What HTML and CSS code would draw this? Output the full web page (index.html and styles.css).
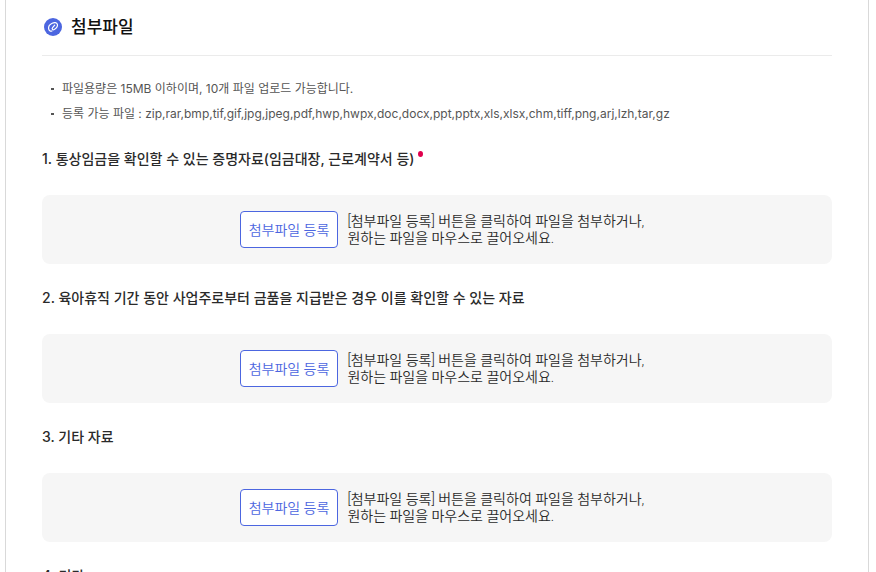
FILE: index.html
```
<!DOCTYPE html>
<html lang="ko">
<head>
  <meta charset="UTF-8">
  <meta name="viewport" content="width=device-width, initial-scale=1.0">
  <title>첨부파일</title>
  <link rel="stylesheet" href="styles.css">
</head>
<body>
  <main class="panel">
    <header class="panel-header">
      <svg class="panel-icon" viewBox="0 0 18 18" aria-hidden="true">
        <circle cx="9" cy="9" r="9" fill="#4c66e0"/>
        <path d="M10.7 7.2L8.6 9.6C7.5 10.9 8.8 12.4 10.2 11.5C12 10.4 13.9 8.2 13.4 6.3C12.8 4.3 10.3 4.1 8.2 5.2C6 6.3 4.3 8.5 4.6 10.6C4.9 12.6 6.3 13.5 8 13" fill="none" stroke="#fff" stroke-width="1.2" stroke-linecap="round"/>
      </svg>
      <h1>첨부파일</h1>
    </header>

    <ul class="notes">
      <li>파일용량은 15MB 이하이며, 10개 파일 업로드 가능합니다.</li>
      <li>등록 가능 파일 : zip,rar,bmp,tif,gif,jpg,jpeg,pdf,hwp,hwpx,doc,docx,ppt,pptx,xls,xlsx,chm,tiff,png,arj,lzh,tar,gz</li>
    </ul>

    <section class="attachment">
      <h2>1. 통상임금을 확인할 수 있는 증명자료(임금대장, 근로계약서 등)<span class="required" role="img" aria-label="필수"></span></h2>
      <div class="dropzone">
        <button type="button" class="file-btn">첨부파일 등록</button>
        <p>[첨부파일 등록] 버튼을 클릭하여 파일을 첨부하거나,<br>원하는 파일을 마우스로 끌어오세요.</p>
      </div>
    </section>

    <section class="attachment">
      <h2>2. 육아휴직 기간 동안 사업주로부터 금품을 지급받은 경우 이를 확인할 수 있는 자료</h2>
      <div class="dropzone">
        <button type="button" class="file-btn">첨부파일 등록</button>
        <p>[첨부파일 등록] 버튼을 클릭하여 파일을 첨부하거나,<br>원하는 파일을 마우스로 끌어오세요.</p>
      </div>
    </section>

    <section class="attachment">
      <h2>3. 기타 자료</h2>
      <div class="dropzone">
        <button type="button" class="file-btn">첨부파일 등록</button>
        <p>[첨부파일 등록] 버튼을 클릭하여 파일을 첨부하거나,<br>원하는 파일을 마우스로 끌어오세요.</p>
      </div>
    </section>

    <section class="attachment">
      <h2>4. 기타</h2>
    </section>
  </main>
</body>
</html>
```
FILE: styles.css
```
* {
  box-sizing: border-box;
}
body {
  height: 100vh;
  margin: 0;
  padding: 0 7px 0 5px;
  overflow: hidden;
  background: #fff;
  color: #2a2a2a;
  font-family: Inter, "Noto Sans CJK KR", sans-serif;
}
h1, h2, p, ul {
  margin: 0;
}
.panel {
  padding: 0 36px;
  border: solid #d9d9d9;
  border-width: 0 1px;
}
.panel-header {
  display: flex;
  align-items: center;
  gap: 9px;
  height: 56px;
  padding: 0 0 2px 2px;
  border-bottom: 1px solid #ebebeb;
}
.panel-icon {
  width: 18px;
  height: 18px;
}
h1 {
  font-size: 17px;
  font-weight: 500;
  line-height: 24px;
  color: #111;
}
.notes {
  padding: 20px 0 20px 9px;
  list-style: none;
  font-size: 12px;
  line-height: 25px;
  color: #555;
}
.notes li {
  display: flex;
  align-items: center;
  gap: 8px;
}
.notes li::before {
  content: "";
  width: 3px;
  height: 2px;
  background: #555;
}
.attachment h2 {
  font-size: 14px;
  font-weight: 500;
  line-height: 26px;
}
.required {
  display: inline-block;
  width: 5px;
  height: 6px;
  margin-left: 4px;
  border-radius: 50%;
  background: #e0004d;
  vertical-align: 7px;
}
.dropzone {
  display: flex;
  align-items: center;
  justify-content: center;
  gap: 9px;
  min-height: 69px;
  margin: 23px 0 21px;
  padding-left: 10px;
  border-radius: 8px;
  background: #f6f6f6;
  font-family: Roboto, "Noto Sans CJK KR", sans-serif;
}
.file-btn {
  height: 37px;
  padding: 0 8px 2px;
  border: 1px solid #4c66e0;
  border-radius: 4px;
  background: #fff;
  color: #4c66e0;
  font-family: inherit;
  font-size: 14px;
  font-weight: 350;
  cursor: pointer;
}
.dropzone p {
  font-size: 14px;
  font-weight: 350;
  line-height: 17px;
}
```
